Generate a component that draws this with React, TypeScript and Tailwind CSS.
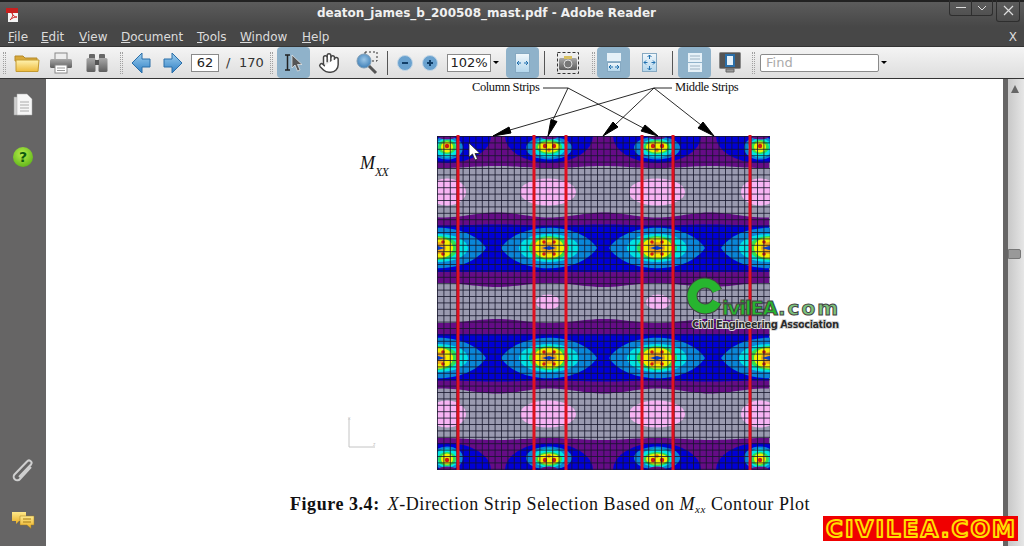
import { Hand } from "lucide-react";

const menus = [
  { label: "File", key: "F", rest: "ile", w: "w-[33px]" },
  { label: "Edit", key: "E", rest: "dit", w: "w-[38px]" },
  { label: "View", key: "V", rest: "iew", w: "w-[42px]" },
  { label: "Document", key: "D", rest: "ocument", w: "w-[76px]" },
  { label: "Tools", key: "T", rest: "ools", w: "w-[43px]" },
  { label: "Window", key: "W", rest: "indow", w: "w-[62px]" },
  { label: "Help", key: "H", rest: "elp", w: "w-[30px]" },
];

function Gradients() {
  return (
    <svg width="0" height="0" className="absolute">
      <defs>
        <linearGradient id="folderG" x1="0" y1="0" x2="0" y2="1">
          <stop offset="0" stopColor="#fff3b0" />
          <stop offset="1" stopColor="#eebb3c" />
        </linearGradient>
        <linearGradient id="arrowG" x1="0" y1="0" x2="0" y2="1">
          <stop offset="0" stopColor="#9fd0f0" />
          <stop offset="1" stopColor="#2f7fc4" />
        </linearGradient>
        <linearGradient id="pageG" x1="0" y1="0" x2="0" y2="1">
          <stop offset="0" stopColor="#f2f8fc" />
          <stop offset="1" stopColor="#b3d6ec" />
        </linearGradient>
        <linearGradient id="grayG" x1="0" y1="0" x2="0" y2="1">
          <stop offset="0" stopColor="#a8a8a8" />
          <stop offset="1" stopColor="#5e5e5e" />
        </linearGradient>
        <radialGradient id="zoomG" cx="0.5" cy="0.4" r="0.6">
          <stop offset="0" stopColor="#9cc6e6" />
          <stop offset="1" stopColor="#3f80b8" />
        </radialGradient>
        <linearGradient id="chatG" x1="0" y1="0" x2="0" y2="1">
          <stop offset="0" stopColor="#ffe98a" />
          <stop offset="1" stopColor="#e8ac22" />
        </linearGradient>
      </defs>
    </svg>
  );
}

function Grip() {
  return <div className="h-[22px] w-[3px] border-x border-dotted border-[#a0a0a0]" />;
}

function Sep() {
  return <div className="h-[24px] w-[1px] bg-[#555]" />;
}

function Btn({ ml, on, children }: { ml: string; on?: boolean; children: React.ReactNode }) {
  return (
    <div className={`${ml} flex h-[31px] w-[33px] shrink-0 items-center justify-center rounded-[4px] ${on ? "bg-[#8fb2ca]" : ""}`}>
      {children}
    </div>
  );
}

function Caret() {
  return <div className="h-0 w-0 border-x-[3px] border-t-[3px] border-x-transparent border-t-black" />;
}

function Toolbar() {
  return (
    <div className="flex h-[33px] shrink-0 items-center border-y border-y-[#333] bg-gradient-to-b from-[#f4f4f4] to-[#dedede]">
      <div className="ml-[3px]">
        <Grip />
      </div>
      <Btn ml="ml-[4px]">
        <svg width="26" height="20" viewBox="0 0 26 20">
          <path d="M1 3h8l2 2h12v3H1z" fill="#d9a93a" stroke="#b58a28" />
          <path d="M2 7h23l-1 11.500H2z" fill="url(#folderG)" stroke="#c39a30" />
        </svg>
      </Btn>
      <Btn ml="ml-[1px]">
        <svg width="24" height="22" viewBox="0 0 24 22">
          <rect x="6" y="1" width="12" height="7" fill="#eee" stroke="#888" />
          <rect x="1" y="7" width="22" height="9" rx="1.500" fill="url(#grayG)" />
          <rect x="6" y="13" width="12" height="8" fill="#fff" stroke="#888" />
          <path d="M8 16h8M8 18.500h8" stroke="#999" />
        </svg>
      </Btn>
      <Btn ml="ml-[3px]">
        <svg width="22" height="18" viewBox="0 0 22 18">
          <rect x="3" y="0" width="6" height="5" rx="1" fill="#666" />
          <rect x="13" y="0" width="6" height="5" rx="1" fill="#666" />
          <rect x="0.500" y="4" width="9" height="14" rx="1.500" fill="url(#grayG)" />
          <rect x="12.500" y="4" width="9" height="14" rx="1.500" fill="url(#grayG)" />
          <rect x="9" y="6" width="4" height="5" fill="#555" />
        </svg>
      </Btn>
      <div className="ml-[7px]">
        <Grip />
      </div>
      <Btn ml="ml-[1px]">
        <svg width="20" height="22" viewBox="0 0 20 22">
          <path d="M1 11 11 1v6h8v8h-8v6z" fill="url(#arrowG)" stroke="#2a6ea8" />
        </svg>
      </Btn>
      <Btn ml="-ml-[1px]">
        <svg width="20" height="22" viewBox="0 0 20 22">
          <path d="M19 11 9 1v6H1v8h8v6z" fill="url(#arrowG)" stroke="#2a6ea8" />
        </svg>
      </Btn>
      <div className="ml-[2px] flex h-[18px] w-[28px] items-center justify-center border border-[#8a8a8a] bg-white text-[13px] text-[#222]">62</div>
      <div className="ml-[7px] w-[10px] text-[13px] text-[#333]">/</div>
      <div className="ml-[3px] w-[24px] text-[13px] text-[#333]">170</div>
      <div className="ml-[7px]">
        <Grip />
      </div>
      <Btn ml="ml-[4px]" on>
        <svg width="22" height="20" viewBox="0 0 22 20">
          <path d="M2 2h5M2 17h5M4.500 2v15" stroke="#222" strokeWidth="1.500" fill="none" />
          <path d="M9 2v13l3-3 2.500 6 2.500-1-2.500-5.500H19z" fill="#555" stroke="#eee" strokeWidth="0.700" />
        </svg>
      </Btn>
      <Btn ml="ml-[2px]">
        <Hand size={22} fill="#fff" stroke="#444" strokeWidth={1.6} />
      </Btn>
      <Btn ml="ml-[5px]">
        <svg width="24" height="24" viewBox="0 0 24 24">
          <rect x="10" y="1" width="12" height="9" fill="none" stroke="#333" strokeDasharray="2 2" />
          <circle cx="9" cy="10" r="7" fill="url(#zoomG)" stroke="#7d9cb5" />
          <path d="m14 15 7 7" stroke="#555" strokeWidth="3" />
        </svg>
      </Btn>
      <div className="ml-[4px]">
        <Sep />
      </div>
      <div className="ml-[9px] flex h-[16px] w-[16px] items-center justify-center rounded-full border border-[#c2d6e6] bg-[#6aa2cf]">
        <div className="h-[2px] w-[6px] bg-[#123f68]" />
      </div>
      <div className="relative ml-[9px] flex h-[16px] w-[16px] items-center justify-center rounded-full border border-[#c2d6e6] bg-[#6aa2cf]">
        <div className="h-[2px] w-[6px] bg-[#123f68]" />
        <div className="absolute h-[6px] w-[2px] bg-[#123f68]" />
      </div>
      <div className="ml-[9px] flex h-[18px] w-[44px] items-center justify-center border border-[#8a8a8a] bg-white text-[13px] text-[#222]">102%</div>
      <div className="ml-[2px]">
        <Caret />
      </div>
      <Btn ml="ml-[7px]" on>
        <svg width="15" height="20" viewBox="0 0 15 20">
          <rect x="0.500" y="0.500" width="14" height="19" fill="url(#pageG)" stroke="#86a9c2" />
          <path d="M2 10h4M2 10l2-2M2 10l2 2M13 10H9M13 10l-2-2M13 10l-2 2" stroke="#1f6fae" fill="none" />
        </svg>
      </Btn>
      <div className="ml-[5px]">
        <Sep />
      </div>
      <Btn ml="ml-[6px]">
        <svg width="22" height="22" viewBox="0 0 22 22">
          <rect x="0.500" y="0.500" width="21" height="21" fill="none" stroke="#333" strokeDasharray="3 2" />
          <rect x="2" y="6" width="18" height="12" rx="1.500" fill="url(#grayG)" />
          <rect x="7" y="4" width="8" height="3" fill="#d8c060" />
          <circle cx="11" cy="12" r="4" fill="#777" stroke="#ddd" />
        </svg>
      </Btn>
      <div className="ml-[8px]">
        <Grip />
      </div>
      <Btn ml="ml-[2px]" on>
        <svg width="14" height="19" viewBox="0 0 14 19">
          <rect x="0" y="0" width="14" height="8" fill="#e6f1f8" />
          <rect x="0.500" y="9.500" width="13" height="9" fill="url(#pageG)" stroke="#86a9c2" />
          <path d="M2 14h4M2 14l2-2M2 14l2 2M12 14H8M12 14l-2-2M12 14l-2 2" stroke="#1f6fae" fill="none" />
        </svg>
      </Btn>
      <Btn ml="ml-[3px]">
        <svg width="15" height="19" viewBox="0 0 15 19">
          <rect x="0.500" y="0.500" width="14" height="18" fill="url(#pageG)" stroke="#86a9c2" />
          <path d="M7.500 2v4M7.500 2l-2 2M7.500 2l2 2M7.500 17v-4M7.500 17l-2-2M7.500 17l2-2M2 9.500h3.500M2 9.500l2-2M2 9.500l2 2M13 9.500H9.500M13 9.500l-2-2M13 9.500l-2 2" stroke="#1f6fae" fill="none" />
        </svg>
      </Btn>
      <div className="ml-[6px]">
        <Sep />
      </div>
      <Btn ml="ml-[5px]" on>
        <svg width="14" height="19" viewBox="0 0 14 19">
          <rect x="0" y="0" width="14" height="9" fill="#e6f1f8" />
          <rect x="0" y="10" width="14" height="9" fill="#e6f1f8" />
          <path d="M2 3h10M2 6h10M2 13h10M2 16h10" stroke="#9db2c2" />
        </svg>
      </Btn>
      <Btn ml="ml-[2px]">
        <svg width="22" height="21" viewBox="0 0 22 21">
          <rect x="0.500" y="0.500" width="21" height="16" rx="1" fill="#555" stroke="#888" />
          <rect x="7" y="3" width="8" height="11" fill="#e6f2fa" stroke="#2b6fa8" strokeWidth="2" />
          <path d="M7 17h8v3H7z" fill="#999" stroke="#666" />
        </svg>
      </Btn>
      <div className="ml-[6px]">
        <Grip />
      </div>
      <div className="ml-[5px] flex h-[18px] w-[119px] items-center rounded-[2px] border border-[#8a8a8a] bg-white pl-[5px] text-[13px] text-[#aaa]">Find</div>
      <div className="ml-[2px]">
        <Caret />
      </div>
    </div>
  );
}

function SideBar() {
  return (
    <div className="flex w-[46px] shrink-0 flex-col items-center justify-between bg-[#666565] pb-[17px] pt-[14px]">
      <div className="flex flex-col items-center gap-[30px]">
        <svg width="20" height="24" viewBox="0 0 20 24">
          <path d="M1 4h11v18H1z" fill="#cfcfcf" stroke="#999" strokeWidth="0.500" />
          <path d="M4 1h10l5 5v16H4z" fill="#f6f6f6" stroke="#aaa" strokeWidth="0.500" />
          <path d="M7 9h9M7 12h9M7 15h9M7 18h9" stroke="#aaa" />
        </svg>
        <div className="flex h-[20px] w-[20px] items-center justify-center rounded-full bg-[radial-gradient(circle_at_45%_35%,#b6ee4a,#4aa70e)] text-[14px] font-bold text-[#0e5a10]">?</div>
      </div>
      <div className="flex flex-col items-center gap-[28px]">
        <svg width="24" height="24" viewBox="0 0 24 24">
          <path d="M20 8 9 20a3.500 3.500 0 0 1-5.500-4.500L16 2.500a2.500 2.500 0 0 1 4 3L8 18" fill="none" stroke="#cfcfcf" strokeWidth="2" />
        </svg>
        <svg width="24" height="18" viewBox="0 0 24 18">
          <path d="M1 1h14v9H8l-3 3v-3H1z" fill="url(#chatG)" />
          <path d="M9 5h14v9h-3v3.500L16 14H9z" fill="url(#chatG)" stroke="#9c7a20" strokeWidth="0.500" />
          <path d="M12 8h8M12 11h8" stroke="#a57c18" />
        </svg>
      </div>
    </div>
  );
}

// plot data, in screen coordinates
const gridX = Array.from({ length: 53 }, (_, i) => 437.5 + i * 6.4);
const gridY = Array.from({ length: 53 }, (_, i) => 136.5 + i * 6.4);
const strips = [458, 534, 566, 642, 673, 750];
const topCols = [447, 549, 657, 760];
const midCols = [438, 549, 657, 769];

function wavePts(base: number, amp: number) {
  const pts: string[] = [];
  for (let x = 437; x <= 770; x += 4) {
    pts.push(`${x},${(base + amp * Math.cos((2 * Math.PI * (x - 550)) / 107)).toFixed(1)}`);
  }
  return pts;
}

function band(topBase: number, topAmp: number, botBase: number, botAmp: number) {
  const a = wavePts(topBase, topAmp);
  const b = wavePts(botBase, botAmp).reverse();
  return `M${a.join(" L")} L${b.join(" L")}Z`;
}

function HalfPlot() {
  return (
    <g>
      <path d={band(136, 0, 167, 1)} fill="#650c86" />
      {topCols.map((c) => {
        const edge = c === 447 || c === 760;
        return (
          <g key={c}>
            <ellipse cx={c} cy={136} rx={44} ry={27} fill="#0000d6" />
            <ellipse cx={c} cy={148} rx={edge ? 16 : 23} ry={11.5} fill="#0a86d8" />
            <ellipse cx={c} cy={148} rx={edge ? 12 : 16} ry={9.5} fill="#00e4e4" />
            <ellipse cx={c} cy={147} rx={edge ? 9 : 13} ry={7} fill="#30e050" />
            <ellipse cx={c} cy={147} rx={edge ? 6 : 11} ry={5.5} fill="#f2f000" />
            <ellipse cx={c} cy={136} rx={9} ry={3.5} fill="#650c86" />
            {edge ? (
              <circle cx={c} cy={146} r={2.2} fill="#d01818" />
            ) : (
              <>
                <circle cx={c - 4} cy={146} r={2.2} fill="#d01818" />
                <circle cx={c + 5} cy={146} r={2.2} fill="#d01818" />
                <circle cx={c} cy={150} r={1.8} fill="#e07010" />
              </>
            )}
          </g>
        );
      })}
      {[447, 548, 657, 760].map((c) => (
        <ellipse key={c} cx={c} cy={192} rx={c === 447 || c === 760 ? 19 : 28} ry={13.5} fill="#f8b4f4" />
      ))}
      <path d={band(215, 2.5, 226, 0.5)} fill="#650c86" />
      <path d={band(225, 0.5, 272, 0)} fill="#0000d6" />
      <path d={band(272, 0, 285, -2)} fill="#650c86" />
      {midCols.map((c) => (
        <g key={c}>
          <path d={`M${c - 48} 248 C${c - 30} 221 ${c + 30} 221 ${c + 48} 248 C${c + 30} 275 ${c - 30} 275 ${c - 48} 248Z`} fill="#0a86d8" />
          <ellipse cx={c} cy={248} rx={30} ry={14} fill="#00e4e4" />
          <ellipse cx={c} cy={248} rx={20} ry={12} fill="#30e050" />
          <ellipse cx={c} cy={248} rx={15} ry={10.5} fill="#f2f000" />
          <ellipse cx={c} cy={248} rx={8} ry={6} fill="#f0a818" />
          <path d={`M${c - 7} 248 L${c} 246 L${c + 7} 248 L${c} 250Z`} fill="#0a40d0" />
          <circle cx={c - 5} cy={242} r={1.8} fill="#d01818" />
          <circle cx={c + 5} cy={242} r={1.8} fill="#d01818" />
          <circle cx={c - 5} cy={254} r={1.8} fill="#d01818" />
          <circle cx={c + 5} cy={254} r={1.8} fill="#d01818" />
        </g>
      ))}
    </g>
  );
}

function Figure() {
  return (
    <svg width="510" height="396" viewBox="340 79 510 396" className="ml-[294px] shrink-0">
      <defs>
        <clipPath id="plotClip">
          <rect x="437" y="136" width="333" height="334" />
        </clipPath>
        <clipPath id="topClip">
          <rect x="437" y="136" width="333" height="167" />
        </clipPath>
      </defs>

      <g fontFamily="'Liberation Serif', serif" fill="#111">
        <text x="472" y="91" fontSize="12.500" letterSpacing="-0.400">Column Strips</text>
        <text x="675" y="91" fontSize="12.500" letterSpacing="-0.400">Middle Strips</text>
        <text x="360" y="169" fontSize="18" fontStyle="italic">M</text>
        <text x="375" y="176" fontSize="12" fontStyle="italic" letterSpacing="-0.800">XX</text>
      </g>

      <g clipPath="url(#plotClip)">
        <rect x="437" y="136" width="333" height="334" fill="#9a9ab0" />
        <g clipPath="url(#topClip)">
          <HalfPlot />
        </g>
        <g transform="matrix(1 0 0 -1 0 606)" clipPath="url(#topClip)">
          <HalfPlot />
        </g>
        <ellipse cx="548" cy="302" rx="12" ry="7.500" fill="#f8b4f4" />
        <ellipse cx="658" cy="302" rx="12" ry="7.500" fill="#f8b4f4" />
        <g stroke="#15152a" strokeOpacity="0.800" strokeWidth="1">
          {gridX.map((x) => (
            <line key={x} x1={x} x2={x} y1={136} y2={470} />
          ))}
          {gridY.map((y) => (
            <line key={y} x1={437} x2={770} y1={y} y2={y} />
          ))}
        </g>
      </g>

      {strips.map((x) => (
        <rect key={x} x={x - 1.5} y="135" width="3" height="335" fill="#e0101f" />
      ))}

      <g stroke="#111" strokeWidth="0.900" fill="none">
        <path d="M543 88h25L552 122M568 88 645 129" />
        <path d="M672 88h-18L510 130M654 88 615 125M654 88 701 125" />
      </g>
      <g fill="#000" stroke="#000" strokeWidth="1" strokeLinejoin="round">
        <path d="M548 136 551 119.500 557 121.500Z" />
        <path d="M658 136 645 125 641 131Z" />
        <path d="M493 136 509 127 511 133Z" />
        <path d="M603 136 613 122 618 127Z" />
        <path d="M714 136 703 122 698 128Z" />
      </g>

      {/* pointer */}
      <path d="M469 143v14l3.500-3 2.500 6 2.500-1-2.500-5.500h5z" fill="#fff" stroke="#222" strokeWidth="0.800" />

      {/* little axis triad */}
      <path d="M349 418v29h26" fill="none" stroke="#c4c4c4" />
      <text x="348" y="420" fontSize="5" fill="#c4c4c4" fontFamily="'Liberation Sans', sans-serif">x</text>
      <text x="373" y="446" fontSize="5" fill="#c4c4c4" fontFamily="'Liberation Sans', sans-serif">z</text>

      {/* watermark */}
      <g fontFamily="'DejaVu Sans', sans-serif" fontWeight="700">
        <circle cx="705" cy="296" r="13" fill="none" stroke="#444" strokeWidth="11" strokeDasharray="70 12" strokeDashoffset="-6" />
        <circle cx="705" cy="296" r="13" fill="none" stroke="#27b52f" strokeWidth="9" strokeDasharray="70 12" strokeDashoffset="-6" />
        <text x="722" y="315" fontSize="20" fill="#27b52f" stroke="#444" strokeWidth="1" textLength="56">ivilEA</text>
        <text x="778" y="315" fontSize="20" fill="#7cc47c" stroke="#444" strokeWidth="1" textLength="60">.com</text>
        <text x="692" y="328" fontSize="10" fill="#2a2a2a" stroke="#d8d8d8" strokeWidth="1.800" textLength="147" className="[paint-order:stroke]">Civil Engineering Association</text>
      </g>
    </svg>
  );
}

function ScrollBar() {
  return (
    <div className="flex w-[21px] shrink-0">
      <div className="w-[5px] bg-[#666565]" />
      <div className="relative w-[16px] bg-gradient-to-r from-[#c8c8c8] to-[#e6e6e6]">
        <div className="absolute left-[3px] top-[6px] h-0 w-0 border-x-[4px] border-b-[8px] border-x-transparent border-b-[#666]" />
        <div className="absolute left-0 top-[170px] h-[10px] w-[13px] rounded-r-[2px] border border-[#777] bg-[#999]" />
      </div>
    </div>
  );
}

export default function App() {
  return (
    <div className="relative flex h-[546px] w-[1024px] flex-col overflow-hidden bg-[#666565] font-['DejaVu_Sans',sans-serif]">
      <Gradients />
      <div className="relative flex h-[27px] shrink-0 items-center border-t-2 border-t-[#222] bg-gradient-to-b from-[#5c5c5c] to-[#474747]">
        <svg width="16" height="16" viewBox="0 0 16 16" className="ml-[5px]">
          <path d="M3 3h10v12H3z" fill="#f4f4f4" />
          <path d="M1 1h12v5H1z" fill="#c8201f" />
          <path d="M5 13c3-3 3-5 2-7 1 3 3 4 5 4-3 0-5 1-7 3z" fill="none" stroke="#d02a2a" />
        </svg>
        <div className="absolute left-[317px] top-[2px] text-[12px] font-bold text-[#f0f0f0]">deaton_james_b_200508_mast.pdf - Adobe Reader</div>
        <div className="absolute left-[949px] -top-[2px] flex">
          <div className="flex h-[16px] w-[23px] items-center justify-center rounded-bl-[3px] border border-t-0 border-[#2e2e2e]">
            <div className="h-[1px] w-[10px] bg-[#ddd]" />
          </div>
          <div className="flex h-[16px] w-[21px] items-center justify-center rounded-br-[3px] border border-l-0 border-t-0 border-[#2e2e2e]">
            <svg width="10" height="6" viewBox="0 0 10 6">
              <path d="m1 1 4 4 4-4" fill="none" stroke="#ddd" />
            </svg>
          </div>
          <div className="ml-[3px] flex h-[22px] w-[24px] items-center justify-center rounded-b-[3px] border border-t-0 border-[#2e2e2e]">
            <svg width="11" height="11" viewBox="0 0 11 11">
              <path d="m1 1 9 9M10 1l-9 9" stroke="#ddd" strokeWidth="1.200" />
            </svg>
          </div>
        </div>
      </div>

      <div className="flex h-[19px] shrink-0 items-center justify-between bg-[#474747] pl-[8px] pr-[7px] text-[12px] text-[#dcdcdc]">
        <div className="flex">
          {menus.map((m) => (
            <div key={m.label} className={m.w}>
              <span className="underline">{m.key}</span>
              {m.rest}
            </div>
          ))}
        </div>
        <div>X</div>
      </div>

      <Toolbar />

      <div className="flex min-h-0 flex-1">
        <SideBar />
        <div className="flex min-w-0 flex-1 flex-col bg-white">
          <Figure />
          <div className="ml-[244px] mt-[19px] whitespace-nowrap font-['Liberation_Serif',serif] text-[18px] leading-[20px] tracking-[0.55px] text-[#111]">
            <span className="font-bold">Figure 3.4:</span>
            <span className="ml-[8px] italic">X</span>-Direction Strip Selection Based on <span className="italic">M</span>
            <sub className="text-[11px] italic">xx</sub> Contour Plot
          </div>
        </div>
        <ScrollBar />
      </div>

      {/* site banner over the corner */}
      <div className="absolute bottom-[5px] left-[823px] h-[25px] w-[195px] bg-[#f00000]">
        <svg width="195" height="25" viewBox="0 0 195 25">
          <text x="3" y="21" fontSize="23" fontWeight="700" fontFamily="'DejaVu Sans', sans-serif" fill="#f00000" stroke="#ffe000" strokeWidth="2" strokeLinejoin="round" textLength="189">CIVILEA.COM</text>
        </svg>
      </div>
    </div>
  );
}
